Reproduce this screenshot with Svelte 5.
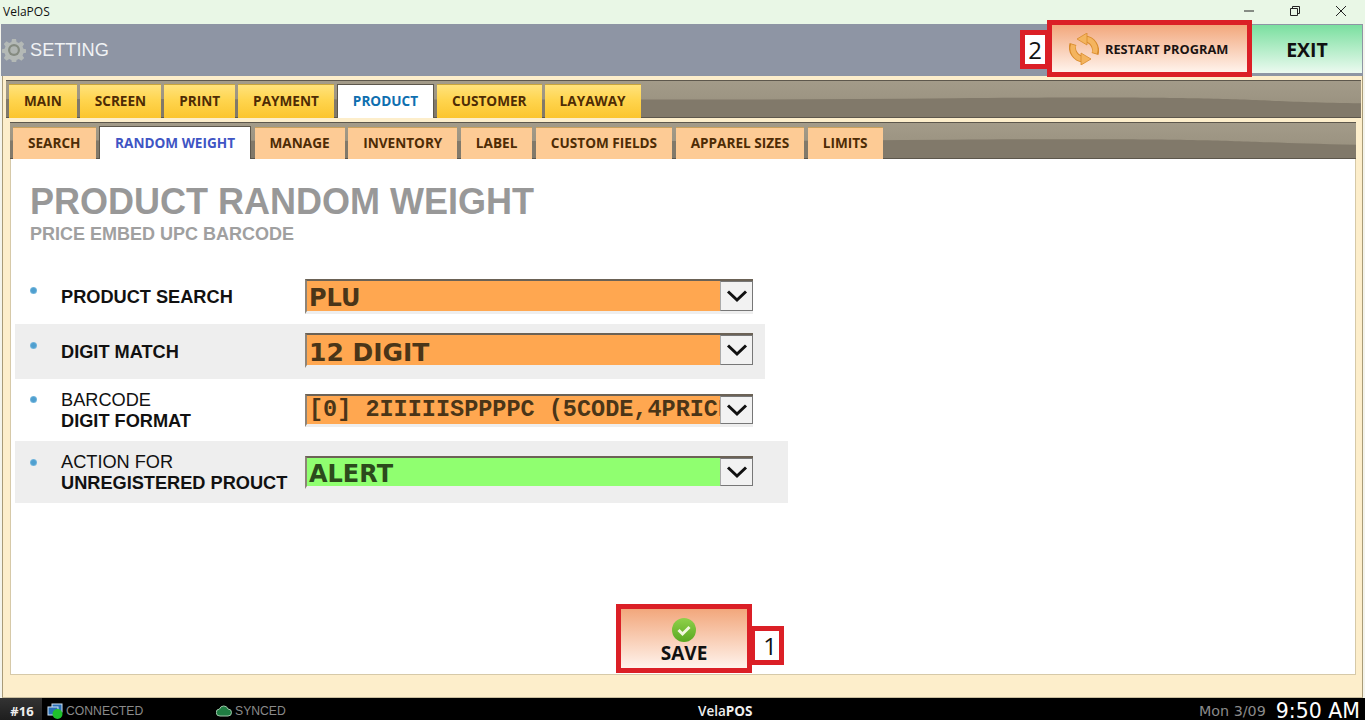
<script>
  const mainTabs = ['MAIN', 'SCREEN', 'PRINT', 'PAYMENT', 'PRODUCT', 'CUSTOMER', 'LAYAWAY'];
  const subTabs = ['SEARCH', 'RANDOM WEIGHT', 'MANAGE', 'INVENTORY', 'LABEL', 'CUSTOM FIELDS', 'APPAREL SIZES', 'LIMITS'];
  const rows = [
    { bold: 'PRODUCT SEARCH', value: 'PLU', cls: 'r1', tone: 'orange' },
    { bold: 'DIGIT MATCH', value: '12 DIGIT', cls: 'r2 shade', tone: 'orange' },
    { light: 'BARCODE', bold: 'DIGIT FORMAT', value: '[0] 2IIIIISPPPPC (5CODE,4PRICE)', cls: 'r3', tone: 'orange mono' },
    { light: 'ACTION FOR', bold: 'UNREGISTERED PROUCT', value: 'ALERT', cls: 'r4 shade', tone: 'green' }
  ];
</script>

<div class="app">
  <div class="titlebar">
    <span class="apptitle">VelaPOS</span>
    <div class="winctl">
      <svg width="12" height="12" viewBox="0 0 12 12"><path d="M1 6h10" stroke="#222" fill="none"/></svg>
      <svg width="12" height="12" viewBox="0 0 12 12"><path d="M1.500 3.500h7v7h-7zM3.500 3.500v-2h7v7h-2" stroke="#222" fill="none"/></svg>
      <svg width="12" height="12" viewBox="0 0 12 12"><path d="M1 1l10 10M11 1L1 11" stroke="#222" fill="none"/></svg>
    </div>
  </div>

  <header class="header">
    <svg class="gear" width="24" height="24" viewBox="0 0 24 24">
      <path fill="#b4b9b6" d="M10 1h4l.6 3 2.200.9 2.600-1.700 2.800 2.800-1.700 2.600.9 2.200 3 .6v3.200l-3 .6-.9 2.200 1.700 2.600-2.800 2.800-2.600-1.700-2.200.9-.6 3h-4l-.6-3-2.200-.9-2.600 1.700-2.800-2.800 1.700-2.600-.9-2.200-3-.6v-3.200l3-.6.9-2.200-1.700-2.600 2.800-2.800 2.600 1.700 2.200-.9z"/>
      <circle cx="12" cy="12" r="6" fill="#858b80"/>
      <circle cx="12" cy="12" r="3.800" fill="#b0b5b2"/>
    </svg>
    <span class="htitle">SETTING</span>
    <div class="hright">
      <button class="restart">
        <svg width="30" height="32" viewBox="0 0 30 32">
          <g fill="none" stroke="#d88b2c" stroke-width="7">
            <path d="M26 21A11.500 11.500 0 0 0 16 6"/>
            <path d="M4 11A11.500 11.500 0 0 0 14 26"/>
          </g>
          <g fill="none" stroke="#f4b45e" stroke-width="5">
            <path d="M25.500 20A10.500 10.500 0 0 0 16 6"/>
            <path d="M4.500 12A10.500 10.500 0 0 0 14 26"/>
          </g>
          <path d="M18 0v12L8 6z" fill="#f4b45e" stroke="#d88b2c" stroke-width=".8"/>
          <path d="M12 32V20l10 6z" fill="#f4b45e" stroke="#d88b2c" stroke-width=".8"/>
        </svg>
        <span>RESTART PROGRAM</span>
        <span class="badge b2">2</span>
      </button>
      <button class="exit">EXIT</button>
    </div>
  </header>

  <main class="body">
    <nav class="bar bar1">
      <svg class="wave" viewBox="0 0 100 10" preserveAspectRatio="none"><path d="M0 5C30 5 48 5.500 70 4.800S90 5.500 100 6.200V10H0z" fill="#81796a"/></svg>
      {#each mainTabs as t}
        <div class="tab main" class:active={t === 'PRODUCT'}>{t}</div>
      {/each}
    </nav>

    <div class="inner">
      <nav class="bar bar2">
        <svg class="wave" viewBox="0 0 100 10" preserveAspectRatio="none"><path d="M0 5C30 5 48 5.500 70 4.800S90 5.500 100 6.200V10H0z" fill="#81796a"/></svg>
        {#each subTabs as t}
          <div class="tab sub" class:active={t === 'RANDOM WEIGHT'}>{t}</div>
        {/each}
      </nav>

      <section class="panel">
        <h1>PRODUCT RANDOM WEIGHT</h1>
        <h2>PRICE EMBED UPC BARCODE</h2>

        <div class="rows">
          {#each rows as r}
            <div class="row {r.cls}">
              <span class="dot"></span>
              <div class="label">
                {#if r.light}<div class="lt">{r.light}</div>{/if}
                <div class="bd">{r.bold}</div>
              </div>
              <div class="select {r.tone}">
                <span class="val">{r.value}</span>
                <span class="chev">
                  <svg width="22" height="14" viewBox="0 0 22 14"><path d="M2 2.500l9 8.500 9-8.500" fill="none" stroke="#111" stroke-width="3"/></svg>
                </span>
              </div>
            </div>
          {/each}
        </div>

        <div class="savewrap">
          <button class="save">
            <svg width="24" height="24" viewBox="0 0 24 24">
              <defs><linearGradient id="g" x1="0" y1="0" x2="0" y2="1"><stop offset="0" stop-color="#8fd14a"/><stop offset="1" stop-color="#5aa821"/></linearGradient></defs>
              <circle cx="12" cy="12" r="12" fill="url(#g)"/>
              <path d="M6.500 12l4 4 7-7" fill="none" stroke="#f2f8df" stroke-width="3"/>
            </svg>
            <span>SAVE</span>
            <span class="badge b1">1</span>
          </button>
        </div>
      </section>
    </div>
  </main>

  <footer class="footer">
    <span class="num">#16</span>
    <span class="stat conn">
      <svg width="16" height="16" viewBox="0 0 16 16">
        <rect x="5" y="1" width="10" height="8" fill="#2a6fb5" stroke="#cfe3f5"/>
        <rect x="1" y="4" width="10" height="8" fill="#2a6fb5" stroke="#cfe3f5"/>
        <circle cx="10.500" cy="11" r="5" fill="#1fc02c"/>
      </svg>
      CONNECTED
    </span>
    <span class="stat sync">
      <svg width="16" height="12" viewBox="0 0 16 12"><path d="M4 11a3.500 3.500 0 0 1-.5-7A4.500 4.500 0 0 1 12 4a3.500 3.500 0 0 1 0 7z" fill="#1f7d42" stroke="#9fc7ab"/></svg>
      SYNCED
    </span>
    <span class="brand">Vela<b>POS</b></span>
    <span class="date">Mon 3/09</span>
    <span class="time">9:50 AM</span>
  </footer>
</div>

<style>
  :global(body) { margin: 0; background: #fff; }
  .app { width: 1365px; height: 720px; display: flex; flex-direction: column; overflow: hidden; font-family: "Liberation Sans", Arial, sans-serif; background: #f4f4ec; }
  button { font-family: inherit; border: 0; padding: 0; cursor: pointer; }

  .titlebar { height: 24px; flex: none; background: #e9f7e6; display: flex; align-items: center; justify-content: space-between; box-sizing: border-box; padding: 0 18px 2px 3px; }
  .apptitle { font: 12px "Open Sans", sans-serif; color: #111; }
  .winctl { display: flex; gap: 34px; }

  .header { height: 52px; flex: none; margin: 0 2px 0 1px; background: #8e95a4; display: flex; align-items: center; box-sizing: border-box; padding: 0 1px 0 1px; }
  .gear { flex: none; }
  .htitle { margin-left: 4px; font-size: 18.200px; color: #f0f2f4; }
  .hright { margin-left: auto; display: flex; align-items: flex-start; height: 100%; padding-top: 1px; box-sizing: border-box; }
  .restart { position: relative; width: 195px; height: 47px; margin-right: 5px; outline: 5px solid #db1f26; background: linear-gradient(#f2a77c, #fff3ec); display: flex; align-items: center; gap: 6px; padding-left: 17px; font: bold 12.800px "Open Sans", sans-serif; color: #1a1412; box-sizing: border-box; }
  .exit { width: 110px; height: 48px; background: linear-gradient(#7adf9f, #ecfaf0); font: bold 19.500px "Open Sans", sans-serif; color: #111; }
  .badge { position: absolute; background: #fff; border: 5px solid #db1f26; font: 24px "Open Sans", sans-serif; color: #111; display: flex; align-items: center; justify-content: center; box-sizing: border-box; z-index: 3; }
  .b2 { left: -32px; top: 5px; width: 30px; height: 39px; }
  .b1 { right: -37px; top: 17px; width: 34px; height: 39px; padding-left: 6px; font-size: 24px; font-weight: 400; }

  .body { flex: 1; min-height: 0; background: #fdeecb; box-sizing: border-box; padding: 4px 3px 0 5px; margin: 0 2px; border-left: 1px solid #a99b78; border-right: 1px solid #a99b78; border-bottom: 1px solid #c9bd9e; display: flex; flex-direction: column; }
  .bar { position: relative; flex: none; box-sizing: border-box; display: flex; align-items: flex-end; border: 1px solid #5d574c; border-width: 1px 0 1px 0; background: linear-gradient(#a39b89, #968e7c); }
  .wave { position: absolute; inset: 0; width: 100%; height: 100%; }
  .bar1 { height: 38px; gap: 3px; padding-left: 3px; margin-left: -2px; margin-right: -2px; }
  .bar2 { height: 37px; gap: 3.500px; padding-left: 3px; }
  .inner { flex: 1; min-height: 0; margin: 4px 3px 22px 2px; display: flex; flex-direction: column; }

  .tab { position: relative; margin-bottom: -1px; padding: 0 15px 2px; box-sizing: border-box; display: flex; align-items: center; font: bold 13.600px "Open Sans", sans-serif; color: #4e2c05; }
  .tab.main { height: 34px; background: linear-gradient(#ffe27c, #ffd54f 45%, #fbc52e); border-top: 1px solid #c9a53c; }
  .tab.sub { height: 32px; background: #fdcb95; border-top: 1px solid #c9a15e; }
  .tab.main.active { background: #fff; color: #0f6fb0; border: 1px solid #5d574c; border-bottom: 0; height: 34px; }
  .tab.sub.active { background: #fff; color: #3f55c4; border: 1px solid #5d574c; border-bottom: 0; height: 33px; }

  .panel { flex: 1; min-height: 0; background: #fff; box-sizing: border-box; padding: 24px 0 0 4px; border-left: 1px solid #d6c9a8; border-right: 1px solid #d6c9a8; border-bottom: 1px solid #d6c9a8; display: flex; flex-direction: column; }
  h1 { margin: 0 0 0 15px; font-size: 36px; line-height: 38px; font-weight: bold; color: #989898; }
  h2 { margin: 2px 0 0 15px; font-size: 18px; line-height: 22px; font-weight: bold; color: #a0a0a0; }

  .rows { margin-top: 25px; display: flex; flex-direction: column; }
  .row { display: flex; align-items: flex-start; box-sizing: border-box; }
  .r1 { height: 54px; width: 750px; padding-top: 9px; }
  .r2 { height: 55px; width: 750px; padding-top: 9px; }
  .r3 { height: 62px; width: 750px; padding-top: 15px; }
  .r4 { height: 62px; width: 773px; padding-top: 15px; }
  .shade { background: #eeeeee; }
  .dot { flex: none; width: 7px; height: 7px; border-radius: 50%; background: radial-gradient(#4f9fcf 40%, #a6d5ee); margin: 8px 24px 0 15px; }
  .r2 .dot { margin-top: 9px; }
  .r3 .dot { margin-top: 2px; }
  .r4 .dot { margin-top: 3px; }
  .label { width: 244px; flex: none; font-size: 18.200px; line-height: 21px; color: #111; }
  .r1 .label { padding-top: 8px; }
  .r2 .label { padding-top: 9px; }
  .r3 .label, .r4 .label { margin-top: -4px; }
  .bd { font-weight: bold; }
  .select { display: flex; width: 448px; height: 35px; box-sizing: border-box; border-top: 2px solid #6b6256; border-left: 2px solid #8d8478; border-bottom: 3px solid #eee; }
  .r3 .select, .r4 .select { height: 33px; }
  .val { flex: 1; min-width: 0; box-sizing: border-box; white-space: nowrap; padding: 4px 0 0 2px; font: bold 24px/26px "DejaVu Sans", sans-serif; color: #4a3518; }
  .r2 .val { padding-top: 5px; font-size: 25px; line-height: 25px; }
  .r4 .val { line-height: 24px; }
  .orange .val { background: #ffa750; }
  .green .val { background: #90ff70; color: #2c4a1c; }
  .r3 .val { overflow: hidden; padding-top: 0; font: bold 23.500px/28px "Liberation Mono", monospace; color: #4a3518; }
  .chev { width: 33px; flex: none; background: #f2f2f2; border: 1px solid #777; border-left-color: #aaa; box-sizing: border-box; display: flex; align-items: center; justify-content: center; }

  .savewrap { margin-top: auto; margin-bottom: 6px; margin-left: 606px; }
  .save { position: relative; width: 126px; height: 59px; margin: 0; outline: 5px solid #db1f26; background: linear-gradient(#f2a77c, #fff3ec); display: flex; flex-direction: column; align-items: center; justify-content: flex-end; padding-bottom: 4px; font: bold 19px/22px "Open Sans", sans-serif; color: #111; box-sizing: border-box; }

  .footer { height: 22px; flex: none; background: #000; display: flex; align-items: center; color: #8a8a8a; font-size: 12.200px; overflow: hidden; box-sizing: border-box; padding-top: 3px; }
  .num { width: 42px; height: 22px; margin-top: -3px; background: linear-gradient(#333, #1e1e1e); color: #eee; font: bold 13px "Open Sans", sans-serif; display: flex; align-items: center; justify-content: center; box-sizing: border-box; padding: 3px 0 0 2px; }
  .stat { display: flex; align-items: center; gap: 3px; }
  .conn { margin-left: 5px; width: 169px; }
  .sync { width: 188px; }
  .brand { margin-left: 294px; width: 60px; color: #eee; font: 600 13.500px "Open Sans", sans-serif; }
  .brand b { font-weight: 700; }
  .date { margin-left: auto; font: 14.300px/16px "DejaVu Sans", sans-serif; color: #8a8a8a; }
  .time { margin: 0 5px 0 10px; font: 20.500px/18px "DejaVu Sans", sans-serif; color: #fff; }
</style>
